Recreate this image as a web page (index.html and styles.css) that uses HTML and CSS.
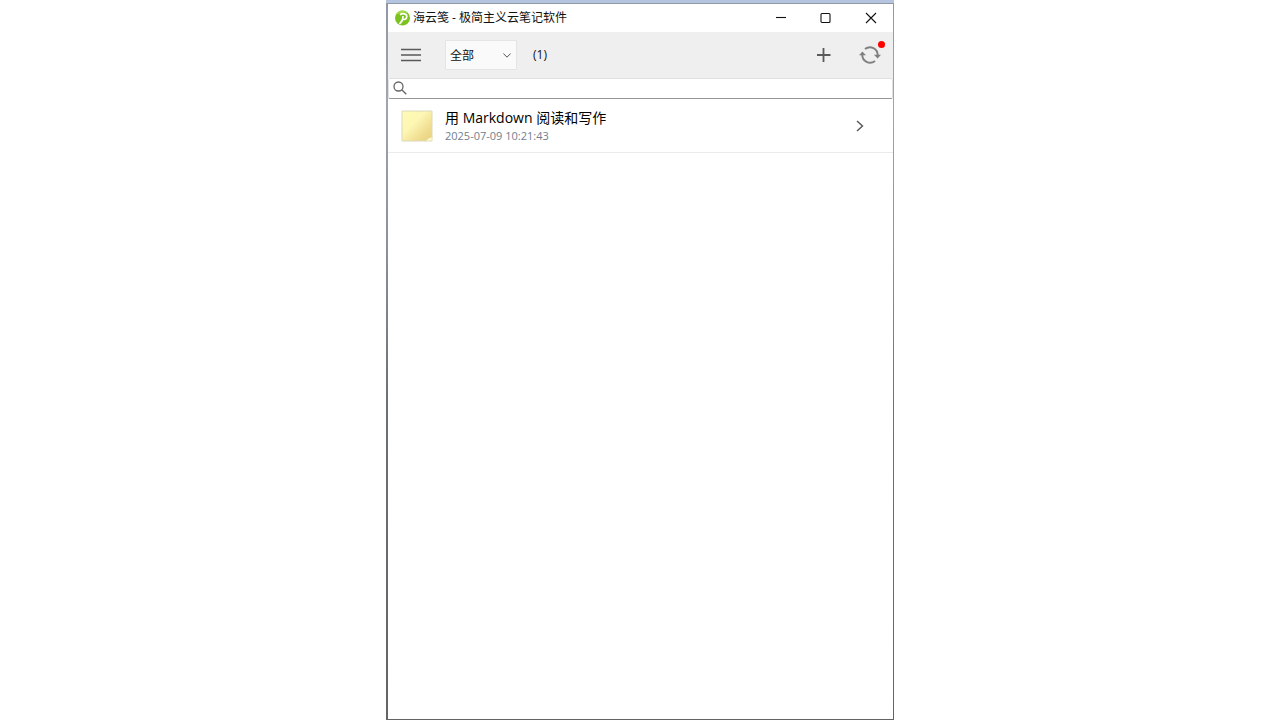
FILE: index.html
```html
<!DOCTYPE html>
<html lang="zh-CN">
<head>
<meta charset="utf-8">
<title>海云笺 - 极简主义云笔记软件</title>
<link rel="stylesheet" href="styles.css">
</head>
<body>
<div class="frame">
  <main class="window">
    <header class="titlebar">
      <svg class="logo" viewBox="0 0 16 16" aria-hidden="true">
        <circle cx="7.5" cy="8" r="7.5" fill="#7cc21e"/>
        <path d="M.6 5A7.5 7.5 0 0 1 13.5 3.4Q7.5 1 .6 5Z" fill="#a6dc4c"/>
        <path d="M5 4.7C7.5 3 12 3.4 11.8 6.6C11.6 9.3 9 9.9 7.2 9.2M8 6C8.2 8.8 7 11.6 4.4 14" fill="none" stroke="#fff" stroke-width="1.7"/>
      </svg>
      <h1 class="app-name">海云笺 - 极简主义云笔记软件</h1>
      <div class="window-controls">
        <button class="control" type="button" aria-label="最小化"><svg viewBox="0 0 12 12"><path d="M1 5.5H11"/></svg></button>
        <button class="control" type="button" aria-label="最大化"><svg viewBox="0 0 12 12"><rect x="1" y="1.5" width="9" height="9" rx="1"/></svg></button>
        <button class="control" type="button" aria-label="关闭"><svg viewBox="0 0 12 12"><path d="M1 1L11 11M11 1L1 11"/></svg></button>
      </div>
    </header>
    <div class="toolbar">
      <button class="tool" type="button" aria-label="菜单"><svg class="menu-icon" viewBox="0 0 20 14"><path d="M0 1.5H20M0 7H20M0 12.5H20"/></svg></button>
      <label class="filter">
        <select class="filter-select" aria-label="分类"><option>全部</option></select>
        <svg class="filter-arrow" viewBox="0 0 8 5" aria-hidden="true"><path d="M.4 .5L4 4.2L7.6 .5"/></svg>
      </label>
      <span class="count">(1)</span>
      <button class="tool tool-add" type="button" aria-label="新建"><svg class="add-icon" viewBox="0 0 14 14"><path d="M6.5 0V14M0 7H13.5"/></svg></button>
      <button class="tool tool-sync" type="button" aria-label="同步">
        <svg class="sync-icon" viewBox="0 0 22 20">
          <path class="sync-arc" d="M6 4A7.8 7.8 0 0 1 18.7 10.5M16 16A7.8 7.8 0 0 1 3.3 9.5"/>
          <path class="sync-head" d="M14.9 9.8H22L18.6 13.6ZM0 10.2H7L3.4 6.4Z"/>
        </svg>
        <span class="dot"></span>
      </button>
    </div>
    <label class="search">
      <svg class="search-icon" viewBox="0 0 14 14" aria-hidden="true"><circle cx="5.5" cy="5.5" r="4.5"/><path d="M8.8 8.8L13.3 13.3"/></svg>
      <input class="search-input" type="text" aria-label="搜索">
    </label>
    <ul class="notes">
      <li>
        <a class="note" href="#">
          <svg class="note-icon" viewBox="0 0 32 32" aria-hidden="true">
            <defs>
              <linearGradient id="paper" x1="0" y1="0" x2="1" y2="1">
                <stop offset="0" stop-color="#fffbb4"/><stop offset=".4" stop-color="#fdf6b4"/><stop offset=".7" stop-color="#f1df93"/><stop offset="1" stop-color="#e6cd7c"/>
              </linearGradient>
            </defs>
            <path d="M1 1H31V27Q29 30 25 31H1Z" fill="url(#paper)" stroke="#dcd9b8" stroke-width="1"/>
            <path d="M25 31Q27 28 31 27V31Z" fill="#fffbd0"/>
            <path d="M24 31H31V26" fill="none" stroke="#e4dcb4" stroke-width="1"/>
          </svg>
          <span class="note-text">
            <span class="note-title">用 Markdown 阅读和写作</span>
            <time class="note-time" datetime="2025-07-09T10:21:43">2025-07-09 10:21:43</time>
          </span>
          <svg class="chevron" viewBox="0 0 8 12" aria-hidden="true"><path d="M1 1L6.5 6L1 11"/></svg>
        </a>
      </li>
    </ul>
  </main>
</div>
</body>
</html>
```
FILE: styles.css
```css
* {
  box-sizing: border-box;
}

body {
  margin: 0;
  background: #fff;
  color: #111;
  font: 12px/16px "Open Sans", "Noto Sans CJK SC", sans-serif;
}

.frame {
  display: flex;
  max-width: 508px;
  min-height: 100vh;
  margin: 0 auto;
  padding: 4px 1px 1px 2px;
  background: linear-gradient(#b6c5df 3px, #9297a5 3px, #a0a4b4 100px, #8a909c 250px, #6c7078 400px, #646464);
}

.window {
  flex: 1;
  min-width: 0;
  background: #fff;
}

button {
  padding: 0;
  border: 0;
  background: none;
}

svg {
  display: block;
  fill: none;
}

.titlebar {
  display: flex;
  align-items: center;
  height: 28px;
  padding-left: 7px;
}

.logo {
  width: 16px;
  height: 16px;
}

.app-name {
  margin: 0 0 0 2px;
  font-size: 12px;
  font-weight: 400;
}

.window-controls {
  display: flex;
  margin-left: auto;
}

.control {
  display: grid;
  place-items: center;
  width: 45px;
  height: 28px;
}

.control svg {
  width: 12px;
  height: 12px;
  stroke: #111;
  stroke-width: 1.1;
}

.toolbar {
  display: flex;
  align-items: center;
  height: 46px;
  background: #efefef;
}

.tool {
  display: grid;
  place-items: center;
  position: relative;
  width: 46px;
  height: 46px;
  stroke: #5a5a5a;
}

.menu-icon {
  width: 20px;
  height: 14px;
  stroke-width: 1.3;
}

.filter {
  position: relative;
  margin-left: 11px;
}

.filter-select {
  display: block;
  width: 72px;
  height: 30px;
  padding: 1px 4px 0;
  appearance: none;
  border: 1px solid #e4e4e4;
  border-radius: 1px;
  background: #fafafa;
  color: #111;
  font: inherit;
}

.filter-arrow {
  position: absolute;
  top: 13px;
  right: 6px;
  width: 8px;
  height: 5px;
  stroke: #555;
  pointer-events: none;
}

.count {
  margin-left: 16px;
}

.tool-add {
  margin-left: auto;
}

.add-icon {
  width: 14px;
  height: 14px;
  stroke-width: 1.8;
}

.sync-icon {
  width: 22px;
  height: 20px;
}

.sync-arc {
  stroke: #808080;
  stroke-width: 2;
}

.sync-head {
  fill: #808080;
  stroke: none;
}

.dot {
  position: absolute;
  top: 9px;
  right: 8px;
  width: 7px;
  height: 7px;
  border-radius: 50%;
  background: #f00;
}

.search {
  display: flex;
  align-items: center;
  height: 21px;
  padding: 0 4px 1px;
  border: 1px solid #e0e0e0;
  border-bottom-color: #969696;
  border-radius: 2px;
}

.search-icon {
  width: 14px;
  height: 14px;
  stroke: #666;
  stroke-width: 1.3;
}

.search-input {
  flex: 1;
  min-width: 0;
  height: 16px;
  padding: 0 5px;
  border: 0;
  outline: 0;
  background: none;
  font: inherit;
}

.notes {
  margin: 0;
  padding: 0;
  list-style: none;
}

.note {
  display: flex;
  align-items: center;
  height: 54px;
  padding: 0 29px 0 13px;
  border-bottom: 1px solid #ebebeb;
  color: #000;
  text-decoration: none;
}

.note-icon {
  width: 32px;
  height: 32px;
}

.note-text {
  display: flex;
  flex: 1;
  flex-direction: column;
  margin-left: 12px;
}

.note-title {
  font-size: 14px;
  line-height: 20px;
}

.note-time {
  color: #708090;
  font-size: 11px;
  line-height: 16px;
}

.chevron {
  width: 8px;
  height: 12px;
  stroke: #555;
  stroke-width: 1.4;
}
```
